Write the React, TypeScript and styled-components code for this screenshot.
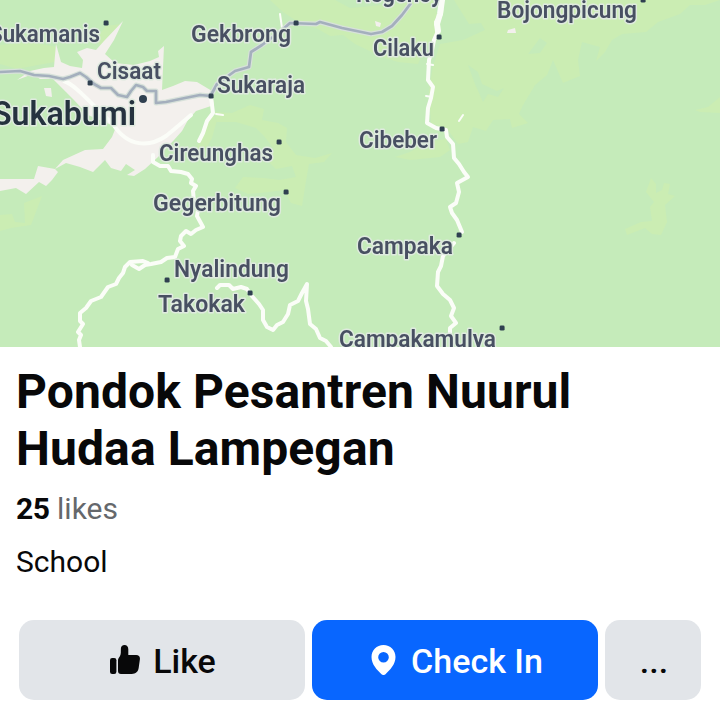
import React from "react";
import styled, { createGlobalStyle, css } from "styled-components";

const GlobalStyle = createGlobalStyle`
  body {
    margin: 0;
    background: #ffffff;
  }
`;

const Page = styled.main`
  width: 720px;
  height: 720px;
  display: flex;
  flex-direction: column;
  overflow: hidden;
  background: #ffffff;
  color: #080809;
  font-family: Roboto, "Liberation Sans", sans-serif;
`;

const MapArea = styled.div`
  flex: none;
  height: 347px;
  overflow: hidden;
  background: #c5ebba;
`;

const MapDrawing = styled.svg`
  display: block;
  width: 720px;
  height: 347px;
`;

const Terrain = styled.g`
  filter: blur(0.7px);
`;

const Place = styled.text<{ $city?: boolean }>`
  font-family: Roboto, "Liberation Sans", sans-serif;
  font-size: ${(p) => (p.$city ? "34px" : "23.8px")};
  font-weight: 600;
  fill: ${(p) => (p.$city ? "#25323f" : "#485062")};
  stroke: #dfeadf;
  stroke-width: 3px;
  stroke-linejoin: round;
  paint-order: stroke;
  filter: blur(0.6px);
`;

const Info = styled.section`
  flex: 1;
  display: flex;
  flex-direction: column;
  padding: 16px 16px 0;
`;

const Title = styled.h1`
  margin: 0;
  font-size: 48px;
  line-height: 57px;
  font-weight: 700;
  letter-spacing: 0.1px;
`;

const Detail = styled.p<{ $gap: number }>`
  margin: ${(p) => p.$gap}px 0 0;
  font-size: 30px;
  line-height: 36px;
`;

const Count = styled.b`
  letter-spacing: -0.4px;
`;

const Muted = styled.span`
  color: #65686c;
`;

const Actions = styled.div`
  display: grid;
  grid-template-columns: 286px 286px 96px;
  gap: 7px;
  margin: 40px 0 0 3px;
`;

const ActionButton = styled.button<{ $primary?: boolean }>`
  display: flex;
  align-items: center;
  justify-content: center;
  gap: 13px;
  height: 80px;
  padding: 1px 0 0 2px;
  border: 0;
  border-radius: 15px;
  background: #e2e5e9;
  color: #080809;
  font: 500 34px/40px Roboto, "Liberation Sans", sans-serif;
  ${(p) =>
    p.$primary &&
    css`
      gap: 15px;
      padding-left: 4px;
      background: #0866ff;
      color: #ffffff;
    `}
`;

const ButtonIcon = styled.svg`
  flex: none;
  display: block;
  margin-top: -2px;
`;

type Label = { name: string; x: number; y: number; w: number; city?: boolean };

const labels: Label[] = [
  { name: "Sukamanis", x: -11, y: 42, w: 111 },
  { name: "Gekbrong", x: 191, y: 42, w: 100 },
  { name: "Regency", x: 356, y: 2, w: 86 },
  { name: "Bojongpicung", x: 497, y: 18, w: 140 },
  { name: "Cilaku", x: 373, y: 56, w: 61 },
  { name: "Cisaat", x: 97, y: 79, w: 64 },
  { name: "Sukaraja", x: 217, y: 93, w: 88 },
  { name: "Sukabumi", x: -8, y: 125, w: 144, city: true },
  { name: "Cireunghas", x: 159, y: 160.5, w: 114 },
  { name: "Cibeber", x: 359, y: 148, w: 78 },
  { name: "Gegerbitung", x: 153, y: 211, w: 128 },
  { name: "Campaka", x: 357, y: 253.5, w: 96 },
  { name: "Nyalindung", x: 174, y: 277, w: 115 },
  { name: "Takokak", x: 158, y: 312, w: 87 },
  { name: "Campakamulya", x: 339, y: 347, w: 157 },
];

const towns: [number, number][] = [
  [106, 23], [296, 23], [439, 37], [90, 83], [211, 96], [279, 142], [442, 129],
  [286, 192], [459, 235], [167, 280], [250, 293], [502, 328], [643, 0],
];

const meadows = [
  "M0 45L30 42 57 47 55 62 38 65 17 69 0 64Z",
  "M95 40L106 26 121 24 112 37 100 45Z",
  "M270 0H335L350 8 434 0 440 30 425 48 418 64 398 62 382 57 355 44 343 35 330 36 318 29 298 22 283 12Z",
  "M454 0H720L705 5 690 5 680 14 658 22 646 32 622 34 612 40 605 52 596 61 600 47 582 42 578 60 580 76 563 83 553 60 547 75 535 85 523 105 519 114 528 123 512 128 510 119 493 120 486 131 473 127 468 142 458 144 448 130 431 123 429 91 433 66 440 44 463 40 485 30 481 23 469 24Z",
  "M214 112L232 113 250 105 264 109 262 120 278 123 287 128 286 142 296 155 315 158 332 153 324 162 309 164 306 181 302 206 291 203 284 190 269 192 248 194 235 188 243 177 264 178 279 180 296 177 292 166 276 169 265 158 274 149 264 136 256 128 236 122 217 122Z",
  "M217 120L212 138 204 152 196 150 203 132 211 112Z",
  "M24 203L42 196 31 225 11 228 0 231V215L12 214 15 222 25 223Z",
  "M395 157L410 152 427 142 446 139 450 150 440 157 411 160Z",
  "M651 178L656 184 656 193 662 190 664 183 670 184 668 194 675 196 665 205 667 222 661 235 652 234 645 228 627 235 625 229 641 222 652 221 650 207 654 202 646 192Z",
  "M695 110L708 107 720 97V113L700 112Z",
];

const forestPatches = [
  "M468 65L478 72 482 84 497 91 504 88 498 97 488 94 483 102 475 84Z",
  "M540 38L547 43 540 53 528 54Z",
];

const urban = [
  "M56 44L61 62 70 66 82 68 83 60 77 52 87 48 96 50 104 41 123 21 114 40 105 54 115 63 134 65 150 61 159 57 158 51 164 46 162 90 173 86 185 81 197 82 212 91 214 105 196 111 188 120 182 131 174 140 158 157 145 169 134 176 127 175 135 170 126 164 121 171 111 168 105 160 93 172 80 167 66 163 55 169 58 172 52 180 46 186 39 182 26 194 16 188 0 191V179L34 179 38 166 55 169 63 160 85 150 103 149 112 137 116 127 88 115 73 99 66 92 53 79 40 79 33 74 41 71 17 80 30 71 44 68 54 67Z",
  "M44 88L51 88 52 97 46 96Z",
  "M375 21L381 23 380 27 376 26Z",
  "M508 30L515 28 516 33 507 33Z",
];

const ringRoads = [
  "M64 81C76 85 92 105 113 124C128 148 150 147 166 136C176 128 184 121 191 115",
];

const roads = [
  "M211 98L212 105 213 113 207 121 203 133 199 141",
  "M153 155L153 162 160 166 168 166 171 171 181 172 188 174 192 179 191 183 196 186 193 191 194 202 198 209 197 216 203 227 196 230 191 234 186 231 181 236 180 241 184 246 178 249 175 257 167 258 161 262 151 264 145 265 139 269 132 265",
  "M148 263L143 261 130 262 125 267 123 273 119 278 116 284 108 287 101 297 91 301 86 308 80 313 80 321 83 324 78 332 81 335 79 340 80 347",
  "M217 288L220 285 229 285 233 289 241 287 247 289 251 295 259 304 263 310 263 320 267 327 273 330 277 325 283 322 288 314 290 305 298 301 302 293 307 284 306 301 308 309 310 324 316 329 320 338 326 341 331 347",
  "M442 0L441 14 436 22 438 31 434 40 432 50 429 60 428 80 433 87 431 98 428 108 427 123 436 128 446 130 447 137 453 144 454 158 459 164 464 172 468 177 457 183 459 192 456 203 450 207 452 213 457 220 462 232",
  "M454 243L443 256 441 266 438 272 437 286 443 294 450 300 454 308 451 316 456 323 450 328 450 336 458 345",
];

const highways = [
  "M0 72L20 71 34 75 49 76 63 79 70 77 80 73 86 77 94 84 101 88 111 88 118 95 127 97 131 91 136 85 143 87 147 91 156 91 156 103 166 102 185 98 200 95 211 96",
  "M211 95L217 84 235 71 249 67 251 52 262 45 281 31 290 23 316 24 320 22 342 28 371 34 382 32 392 26 402 15 411 3",
];

function RegionMap() {
  return (
    <MapDrawing viewBox="0 0 720 347" role="img" aria-label="Map">
      <Terrain>
        <g fill="#cbedb3">{meadows.map((d) => <path key={d} d={d} />)}</g>
        <g fill="#c5ebba">{forestPatches.map((d) => <path key={d} d={d} />)}</g>
        <g fill="#f3f0ed">{urban.map((d) => <path key={d} d={d} />)}</g>
        <g fill="none" stroke="#fbfdf8" strokeWidth="4" strokeLinejoin="round" strokeLinecap="round">
          {ringRoads.map((d) => <path key={d} d={d} />)}
          {roads.map((d) => <path key={d} d={d} />)}
          <path strokeWidth="6" d="M442 0L440 14 437 24 438 31" />
          <path strokeWidth="2" d="M216 114L223 115M280 14L282 28M427 64L433 65M426 96L432 97M459 121L463 115" />
        </g>
        <g fill="none" strokeLinejoin="round">
          <g stroke="#d7e1da" strokeWidth="5">{highways.map((d) => <path key={d} d={d} />)}</g>
          <g stroke="#a4afbd" strokeWidth="2.7">{highways.map((d) => <path key={d} d={d} />)}</g>
        </g>
        <g fill="#2f4050">
          {towns.map(([x, y]) => <rect key={`${x}-${y}`} x={x - 2.4} y={y - 2.4} width="5" height="5" rx="1.4" />)}
          <circle cx="143" cy="99" r="4" />
        </g>
      </Terrain>
      {labels.map((l) => (
        <Place key={l.name} $city={l.city} x={l.x} y={l.y} textLength={l.w} lengthAdjust="spacingAndGlyphs">
          {l.name}
        </Place>
      ))}
    </MapDrawing>
  );
}

export default function App() {
  return (
    <>
      <GlobalStyle />
      <Page>
        <MapArea>
          <RegionMap />
        </MapArea>
        <Info>
          <Title>Pondok Pesantren Nuurul Hudaa Lampegan</Title>
          <Detail $gap={14}>
            <Count>25</Count> <Muted>likes</Muted>
          </Detail>
          <Detail $gap={17}>School</Detail>
          <Actions>
            <ActionButton>
              <ButtonIcon width="30" height="29" viewBox="0 0 30 29" fill="currentColor">
                <rect x="0" y="13" width="6.4" height="16" rx="2.2" />
                <path d="M8 15.6C8 13.5 9 12.7 9.9 11.2C11.2 9 10.7 6.2 10.9 3.4C11 1.3 12.4 0 14.4 0C17 0 18.3 1.8 18.3 4.2V10H26.2C28.8 10 30.2 11.7 29.9 14.2L28.7 22.8C28.1 26.8 25.8 29 21.7 29H11C9 29 8 28 8 26Z" />
              </ButtonIcon>
              Like
            </ActionButton>
            <ActionButton $primary>
              <ButtonIcon width="25" height="30" viewBox="0 0 25 30" fill="currentColor">
                <path
                  fillRule="evenodd"
                  d="M12.5 0C19.4 0 24.5 5.1 24.5 12C24.5 19.4 18.8 25.2 14.5 29.2C13.3 30.3 11.7 30.3 10.5 29.2C6.2 25.2 .5 19.4 .5 12C.5 5.1 5.6 0 12.5 0ZM12.5 7A5.3 5.3 0 1 0 12.5 17.6A5.3 5.3 0 1 0 12.5 7Z"
                />
              </ButtonIcon>
              Check In
            </ActionButton>
            <ActionButton>...</ActionButton>
          </Actions>
        </Info>
      </Page>
    </>
  );
}
